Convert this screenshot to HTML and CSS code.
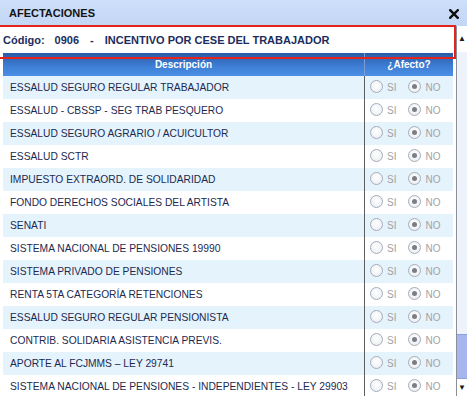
FILE: index.html
```html
<!DOCTYPE html>
<html lang="es">
<head>
<meta charset="utf-8">
<title>Afectaciones</title>
<link rel="stylesheet" href="styles.css">
</head>
<body>
<div class="dialog">
  <div class="titlebar">
    <span class="title">AFECTACIONES</span>
    <svg class="close" width="10" height="10" viewBox="0 0 10 10" aria-label="Cerrar"><path d="M1.2 1.2 L8.8 8.8 M8.8 1.2 L1.2 8.8" stroke="#111" stroke-width="2.4" stroke-linecap="square"/></svg>
  </div>
  <div class="content">
    <div class="main">
      <div class="code">
        <span class="code-label">Código:</span>
        <span class="code-num">0906</span>
        <span class="code-sep">-</span>
        <span class="code-name">INCENTIVO POR CESE DEL TRABAJADOR</span>
      </div>
      <table class="grid">
        <thead>
          <tr><th class="col-desc">Descripción</th><th class="col-af">¿Afecto?</th></tr>
        </thead>
        <tbody>
          <tr><td>ESSALUD SEGURO REGULAR TRABAJADOR</td><td class="opts"><span class="radio"></span><span class="lbl">SI</span><span class="radio on"></span><span class="lbl">NO</span></td></tr>
          <tr><td>ESSALUD - CBSSP - SEG TRAB PESQUERO</td><td class="opts"><span class="radio"></span><span class="lbl">SI</span><span class="radio on"></span><span class="lbl">NO</span></td></tr>
          <tr><td>ESSALUD SEGURO AGRARIO / ACUICULTOR</td><td class="opts"><span class="radio"></span><span class="lbl">SI</span><span class="radio on"></span><span class="lbl">NO</span></td></tr>
          <tr><td>ESSALUD SCTR</td><td class="opts"><span class="radio"></span><span class="lbl">SI</span><span class="radio on"></span><span class="lbl">NO</span></td></tr>
          <tr><td>IMPUESTO EXTRAORD. DE SOLIDARIDAD</td><td class="opts"><span class="radio"></span><span class="lbl">SI</span><span class="radio on"></span><span class="lbl">NO</span></td></tr>
          <tr><td>FONDO DERECHOS SOCIALES DEL ARTISTA</td><td class="opts"><span class="radio"></span><span class="lbl">SI</span><span class="radio on"></span><span class="lbl">NO</span></td></tr>
          <tr><td>SENATI</td><td class="opts"><span class="radio"></span><span class="lbl">SI</span><span class="radio on"></span><span class="lbl">NO</span></td></tr>
          <tr><td>SISTEMA NACIONAL DE PENSIONES 19990</td><td class="opts"><span class="radio"></span><span class="lbl">SI</span><span class="radio on"></span><span class="lbl">NO</span></td></tr>
          <tr><td>SISTEMA PRIVADO DE PENSIONES</td><td class="opts"><span class="radio"></span><span class="lbl">SI</span><span class="radio on"></span><span class="lbl">NO</span></td></tr>
          <tr><td>RENTA 5TA CATEGORÍA RETENCIONES</td><td class="opts"><span class="radio"></span><span class="lbl">SI</span><span class="radio on"></span><span class="lbl">NO</span></td></tr>
          <tr><td>ESSALUD SEGURO REGULAR PENSIONISTA</td><td class="opts"><span class="radio"></span><span class="lbl">SI</span><span class="radio on"></span><span class="lbl">NO</span></td></tr>
          <tr><td>CONTRIB. SOLIDARIA ASISTENCIA PREVIS.</td><td class="opts"><span class="radio"></span><span class="lbl">SI</span><span class="radio on"></span><span class="lbl">NO</span></td></tr>
          <tr><td>APORTE AL FCJMMS – LEY 29741</td><td class="opts"><span class="radio"></span><span class="lbl">SI</span><span class="radio on"></span><span class="lbl">NO</span></td></tr>
          <tr><td>SISTEMA NACIONAL DE PENSIONES - INDEPENDIENTES - LEY 29903</td><td class="opts"><span class="radio"></span><span class="lbl">SI</span><span class="radio on"></span><span class="lbl">NO</span></td></tr>
        </tbody>
      </table>
    </div>
    <div class="scrollbar">
      <div class="arrow up">▲</div>
      <div class="track"><div class="thumb"></div></div>
      <div class="arrow down">▼</div>
    </div>
  </div>
  <div class="highlight"></div>
</div>
</body>
</html>
```

FILE: styles.css
```css
html, body {
  margin: 0;
  padding: 0;
}
body {
  width: 467px;
  height: 396px;
  overflow: hidden;
  background: #ffffff;
  font-family: "Liberation Sans", Arial, sans-serif;
}
.dialog {
  position: relative;
  width: 467px;
  height: 396px;
  overflow: hidden;
  background: #ffffff;
}
.titlebar {
  height: 26px;
  display: flex;
  align-items: center;
  justify-content: space-between;
  padding: 0 8px 0 9px;
  background: linear-gradient(#cddff9, #c3d6f5);
  box-sizing: border-box;
}
.title {
  font-size: 11px;
  font-weight: bold;
  color: #141414;
}
.close {
  display: block;
  margin-top: 1px;
}
.content {
  display: flex;
  height: 370px;
}
.main {
  width: 456px;
  flex: none;
}
.code {
  height: 27px;
  display: flex;
  align-items: center;
  padding-left: 3px;
  font-size: 11px;
  font-weight: bold;
  color: #1b2d5c;
  background: #ffffff;
  white-space: nowrap;
}
.code-num { margin-left: 10px; }
.code-sep { margin-left: 11px; }
.code-name { margin-left: 11px; }
.grid {
  margin-left: 3px;
  width: 449px;
  border-collapse: collapse;
  table-layout: fixed;
}
.grid thead th {
  height: 23px;
  padding: 0;
  font-size: 10px;
  font-weight: bold;
  color: #ffffff;
  background: linear-gradient(#2a5ba6, #3f7fd6 60%, #4c8fe6);
  text-align: center;
}
.col-desc { width: 361px; border-right: 1px solid #7d9bd3; }
.col-af { width: 88px; }
.grid tbody td {
  height: 23px;
  padding: 0 0 0 7px;
  font-size: 10.25px;
  color: #1c2a50;
  white-space: nowrap;
  overflow: hidden;
}
.grid tbody tr:nth-child(odd) td { background: #e5f3fd; }
.grid tbody tr:nth-child(even) td { background: #ffffff; }
.grid tbody td:first-child { border-right: 1px solid #5e5e5e; }
.grid tbody td.opts {
  padding: 0 0 0 5px;
}
.opts {
  font-size: 10px;
}
.radio {
  display: inline-block;
  width: 11px;
  height: 11px;
  border: 1px solid #a4adbd;
  border-radius: 50%;
  background: radial-gradient(circle at 50% 40%, #ffffff, #e8ebf0);
  vertical-align: middle;
  position: relative;
  margin-top: -2px;
}
.radio.on::after {
  content: "";
  position: absolute;
  left: 3px;
  top: 3px;
  width: 5px;
  height: 5px;
  border-radius: 50%;
  background: #7b7e84;
}
.lbl {
  display: inline-block;
  vertical-align: middle;
  color: #a2a2a2;
  font-size: 10px;
  margin-left: 4px;
  margin-right: 12px;
}
.lbl:last-child { margin-right: 0; }
.scrollbar {
  width: 11px;
  flex: none;
  display: flex;
  flex-direction: column;
  border-left: 1px solid #8a8f99;
  box-sizing: border-box;
  background: #ffffff;
}
.arrow {
  font-size: 8px;
  color: #1a1a1a;
  text-align: center;
  line-height: 1;
}
.arrow.up {
  height: 26px;
  display: flex;
  align-items: center;
  justify-content: center;
}
.arrow.down {
  height: 17px;
  display: flex;
  align-items: center;
  justify-content: center;
}
.track {
  flex: 1;
  display: flex;
  flex-direction: column;
  justify-content: flex-end;
  background: #eef2fb;
}
.thumb {
  height: 43px;
  background: #a7b7ee;
  border-top: 1px solid #8a9ee0;
  border-bottom: 1px solid #8a9ee0;
}
.highlight {
  position: absolute;
  left: -3px;
  top: 25px;
  width: 459px;
  height: 34px;
  border: 2px solid #e6231a;
  box-sizing: border-box;
  pointer-events: none;
}
```
